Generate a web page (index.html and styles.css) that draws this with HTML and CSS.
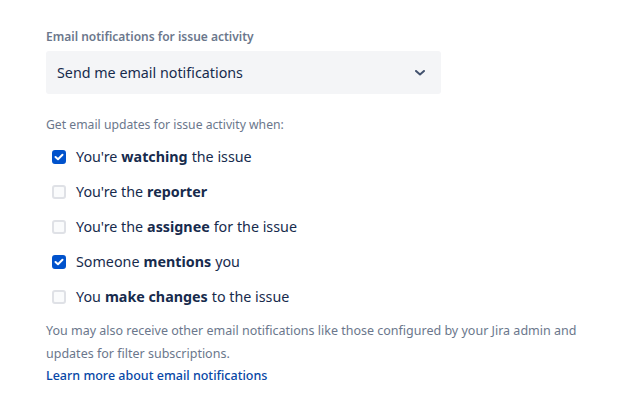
FILE: index.html
```html
<!DOCTYPE html>
<html lang="en">
<head>
  <meta charset="UTF-8">
  <title>Email notifications</title>
  <link rel="stylesheet" href="styles.css">
</head>
<body>
  <div class="settings">
    <div class="field">
      <label class="field-label">Email notifications for issue activity</label>
      <div class="select">
        <span>Send me email notifications</span>
        <svg class="chevron" width="10" height="6" viewBox="0 0 10 6">
          <path d="M1 1l4 3.5L9 1" fill="none" stroke="#42526e" stroke-width="2" stroke-linecap="round" stroke-linejoin="round"/>
        </svg>
      </div>
    </div>

    <p class="hint">Get email updates for issue activity when:</p>

    <ul class="options">
      <li class="option"><span class="box checked"><svg width="10" height="8" viewBox="0 0 10 8"><path d="M1.5 4l2.5 2.3L8.5 1.7" fill="none" stroke="#fff" stroke-width="2" stroke-linecap="round" stroke-linejoin="round"/></svg></span>You're <b>watching</b> the issue</li>
      <li class="option"><span class="box"></span>You're the <b>reporter</b></li>
      <li class="option"><span class="box"></span>You're the <b>assignee</b> for the issue</li>
      <li class="option"><span class="box checked"><svg width="10" height="8" viewBox="0 0 10 8"><path d="M1.5 4l2.5 2.3L8.5 1.7" fill="none" stroke="#fff" stroke-width="2" stroke-linecap="round" stroke-linejoin="round"/></svg></span>Someone <b>mentions</b> you</li>
      <li class="option"><span class="box"></span>You <b>make changes</b> to the issue</li>
    </ul>

    <p class="note">You may also receive other email notifications like those configured by your Jira admin and updates for filter subscriptions.</p>
    <a href="#" class="learn">Learn more about email notifications</a>
  </div>
</body>
</html>
```

FILE: styles.css
```css
* {
  margin: 0;
  padding: 0;
  box-sizing: border-box;
}

body {
  font-family: 'Noto Sans', sans-serif;
  background: #fff;
  color: #172b4d;
}

.settings {
  padding: 28px 20px 0 46px;
}

.field-label {
  display: block;
  font-size: 12px;
  font-weight: 600;
  color: #6b778c;
  line-height: 18px;
  margin-bottom: 5px;
}

.select {
  width: 395px;
  height: 43px;
  background: #f4f5f7;
  border-radius: 3px;
  display: flex;
  align-items: center;
  justify-content: space-between;
  padding: 0 16px 0 11px;
  font-size: 14.3px;
  color: #172b4d;
}

.hint {
  margin-top: 22px;
  font-size: 12.2px;
  color: #6b778c;
  line-height: 18px;
}

.options {
  list-style: none;
  margin-top: 5px;
}

.option {
  display: flex;
  align-items: center;
  height: 35px;
  font-size: 14.3px;
  padding-left: 6px;
}

.option b {
  font-weight: 700;
  margin: 0 4px;
}

.box {
  width: 14px;
  height: 14px;
  border: 2px solid #dfe1e6;
  background: #fafbfc;
  border-radius: 3px;
  margin-right: 10px;
  display: flex;
  align-items: center;
  justify-content: center;
}

.box.checked {
  background: #0052cc;
  border-color: #0052cc;
}

.note {
  margin-top: 5px;
  font-size: 12.5px;
  line-height: 23px;
  color: #6b778c;
}

.learn {
  display: block;
  font-size: 12.5px;
  line-height: 21px;
  font-weight: 500;
  color: #0747a6;
  text-decoration: none;
}
```
